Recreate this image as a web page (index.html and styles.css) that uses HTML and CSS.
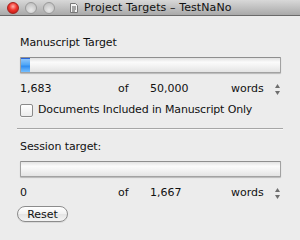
FILE: index.html
```html
<!DOCTYPE html>
<html lang="en">
<head>
    <meta charset="UTF-8">
    <title>Project Targets</title>
    <link rel="stylesheet" href="styles.css">
</head>
<body>
    <div class="window">
        <div class="titlebar">
            <div class="lights">
                <span class="light close"></span>
                <span class="light"></span>
                <span class="light"></span>
            </div>
            <div class="title">
                <svg class="doc-icon" width="8" height="10" viewBox="0 0 8 10">
                    <path d="M0.5 0.5 H5.5 L7.5 2.5 V9.5 H0.5 Z" fill="#f4f4f4" stroke="#777" stroke-width="1"/>
                    <path d="M2 4 H6 M2 6 H6 M2 8 H5" stroke="#555" stroke-width="1"/>
                </svg>
                Project Targets &ndash; TestNaNo
            </div>
        </div>

        <div class="content">
            <div class="label">Manuscript Target</div>
            <div class="bar"><div class="fill" style="width: 9px;"></div></div>
            <div class="count-row">
                <span>1,683</span>
                <span>of</span>
                <span>50,000</span>
                <span>words</span>
                <svg class="stepper" width="5" height="11" viewBox="0 0 5 11">
                    <path d="M2.5 0 L5 4 H0 Z M2.5 11 L5 7 H0 Z" fill="#6e6e6e"/>
                </svg>
            </div>
            <label class="check-row">
                <span class="checkbox"></span>
                Documents Included in Manuscript Only
            </label>

            <div class="separator"></div>

            <div class="label session">Session target:</div>
            <div class="bar"></div>
            <div class="count-row">
                <span>0</span>
                <span>of</span>
                <span>1,667</span>
                <span>words</span>
                <svg class="stepper" width="5" height="11" viewBox="0 0 5 11">
                    <path d="M2.5 0 L5 4 H0 Z M2.5 11 L5 7 H0 Z" fill="#6e6e6e"/>
                </svg>
            </div>
            <button class="reset-btn">Reset</button>
        </div>
    </div>
</body>
</html>
```

FILE: styles.css
```css
body {
    margin: 0;
    font-family: "DejaVu Sans", "Liberation Sans", sans-serif;
    font-size: 11px;
    color: #111;
    background-color: #ececec;
}
.window {
    width: 300px;
    height: 240px;
    background-color: #ececec;
    overflow: hidden;
}
.titlebar {
    height: 15px;
    display: flex;
    align-items: center;
    background: linear-gradient(#d8d8d8, #a9a9a9);
    border-bottom: 1px solid #6a6a6a;
    padding-left: 7px;
}
.lights {
    display: flex;
    gap: 6px;
}
.light {
    width: 10px;
    height: 10px;
    border-radius: 50%;
    border: 1px solid #9a9a9a;
    background: radial-gradient(circle at 50% 70%, #e8e8e8, #b8b8b8);
    box-sizing: content-box;
}
.light.close {
    border-color: #a3211e;
    background: radial-gradient(circle at 50% 35%, #ffb3ad 0, #f0352d 45%, #b5140e 100%);
}
.title {
    display: flex;
    align-items: center;
    gap: 6px;
    margin-left: 15px;
    font-size: 11px;
    color: #111;
    letter-spacing: 0.1px;
}
.doc-icon {
    display: block;
}
.content {
    padding: 20px 19px 0 20px;
}
.label {
    line-height: 14px;
    letter-spacing: -0.1px;
}
.label.session {
    margin-top: 10px;
}
.bar {
    margin-top: 7px;
    height: 14px;
    border: 1px solid #a2a2a2;
    border-top-color: #8e8e8e;
    border-radius: 1px;
    background: linear-gradient(#e2e2e2, #fbfbfb 30%, #f2f2f2 60%, #e4e4e4);
    box-shadow: 0 1px 1px rgba(0, 0, 0, 0.22);
    overflow: hidden;
}
.fill {
    height: 100%;
    border-top: 1px solid #2b64d8;
    box-sizing: border-box;
    background: linear-gradient(#8dc5fb, #4ea6f6 45%, #2e8cf0 55%, #76c0ff);
}
.count-row {
    display: grid;
    grid-template-columns: 98px 32px 81px 44px 5px;
    align-items: center;
    margin-top: 9px;
    line-height: 14px;
}
.stepper {
    display: block;
}
.check-row {
    display: flex;
    align-items: center;
    gap: 5px;
    margin-top: 7px;
    line-height: 14px;
    letter-spacing: -0.15px;
}
.checkbox {
    width: 11px;
    height: 11px;
    border: 1px solid #8a8a8a;
    border-radius: 2px;
    background: linear-gradient(#ffffff, #ececec);
    box-shadow: 0 1px 0 rgba(255, 255, 255, 0.6);
}
.separator {
    margin: 11px 0 0 -3px;
    height: 1px;
    width: 266px;
    background-color: #a6a6a6;
    border-bottom: 1px solid #f8f8f8;
}
.reset-btn {
    display: block;
    margin: 6px 0 0 -3px;
    width: 51px;
    height: 16px;
    padding: 0;
    font-family: inherit;
    font-size: 11px;
    color: #111;
    border: 1px solid #8c8c8c;
    border-radius: 8px;
    background: linear-gradient(#ffffff, #f1f1f1 50%, #e4e4e4 51%, #f4f4f4);
    box-shadow: 0 1px 0 rgba(0, 0, 0, 0.08);
}
```
